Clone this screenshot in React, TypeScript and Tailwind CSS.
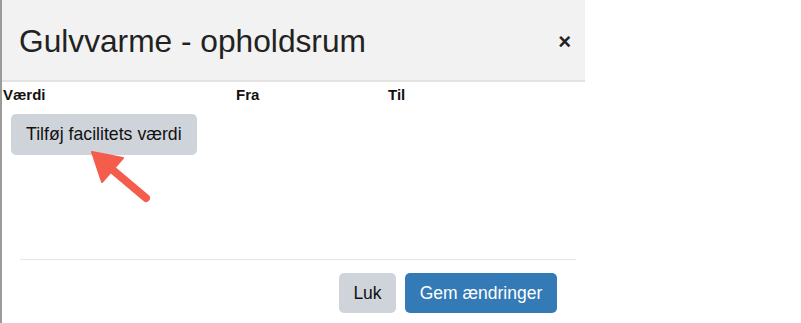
export default function App() {
  return (
    <div className="relative flex h-[323px] w-[801px] overflow-hidden bg-white font-['Liberation_Sans',Arial,sans-serif] text-[#222]">
      <div className="w-[2px] shrink-0 bg-[#9b9b9b]" />
      <div className="flex w-[583px] shrink-0 flex-col">
        <div className="flex h-[82px] items-center justify-between border-b-2 border-[#e3e3e3] bg-[#f2f2f2] pl-[17px] pr-[14px]">
          <h1 className="pt-[3px] text-[31.7px] leading-none text-[#222]">Gulvvarme - opholdsrum</h1>
          <button className="pt-[4px] text-[22px] font-bold leading-none text-[#222]">×</button>
        </div>
        <div className="flex h-[26px] items-center pl-[1px] text-[15px] font-bold text-[#111]">
          <div className="w-[233px]">Værdi</div>
          <div className="w-[152px]">Fra</div>
          <div>Til</div>
        </div>
        <div className="pl-[9px] pt-[6px]">
          <button className="h-[41px] rounded-[5px] bg-[#cfd4db] px-[15px] text-[17.7px] text-[#111]">
            Tilføj facilitets værdi
          </button>
        </div>
        <div className="ml-[18px] mr-[9px] mt-[104px] border-t border-[#e6e6e6]" />
        <div className="flex justify-end gap-[9px] pr-[28px] pt-[13px]">
          <button className="h-[40px] w-[57px] rounded-[5px] bg-[#cfd4db] text-[17.5px] text-[#111]">Luk</button>
          <button className="h-[40px] w-[152px] rounded-[5px] bg-[#337ab7] text-[17.5px] text-white">Gem ændringer</button>
        </div>
      </div>
      <svg className="absolute left-0 top-0" width="801" height="323" viewBox="0 0 801 323">
        <line x1="146" y1="198" x2="108" y2="166" stroke="#f45d4c" strokeWidth="8" strokeLinecap="round" />
        <polygon points="92,152 123,158 102,182" fill="#f45d4c" stroke="#f45d4c" strokeWidth="2" strokeLinejoin="round" />
      </svg>
    </div>
  );
}
